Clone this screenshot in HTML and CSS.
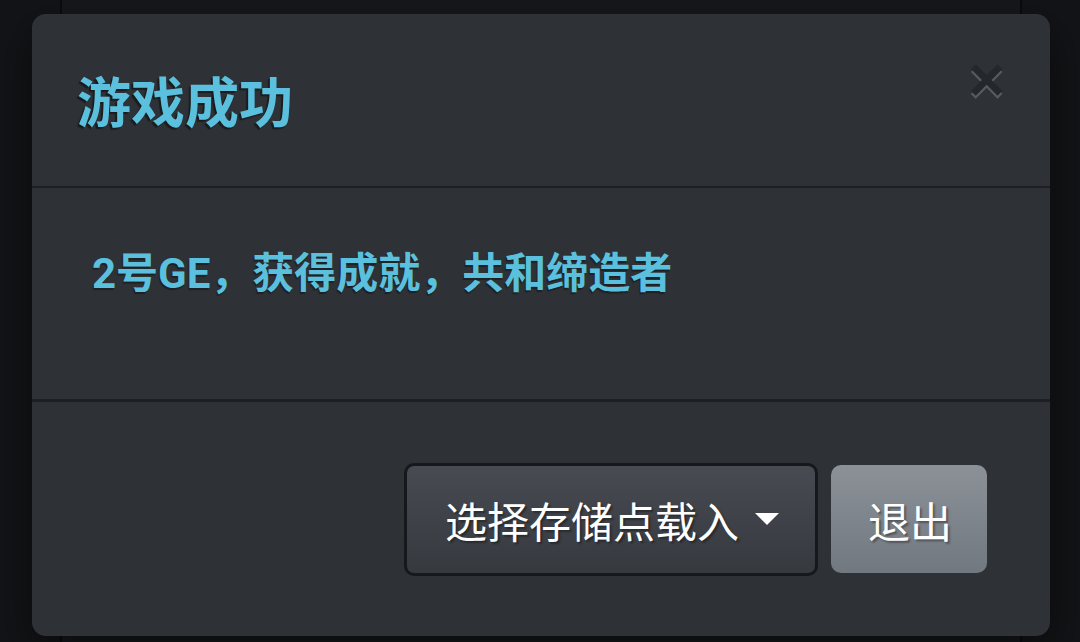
FILE: index.html
```html
<!DOCTYPE html>
<html lang="zh-CN">
<head>
<meta charset="utf-8">
<title>游戏成功</title>
<link rel="stylesheet" href="styles.css">
</head>
<body>
<div class="page"></div>
<div class="modal">
  <div class="modal-header">
    <h4 class="modal-title">游戏成功</h4>
    <button class="close" type="button">&times;</button>
  </div>
  <div class="modal-body">
    <p class="message">2号GE，获得成就，共和缔造者</p>
  </div>
  <div class="modal-footer">
    <button class="btn btn-dropdown" type="button"><span class="label">选择存储点载入</span><span class="caret"></span></button>
    <button class="btn btn-exit" type="button">退出</button>
  </div>
</div>
</body>
</html>
```

FILE: styles.css
```css
html, body {
  margin: 0;
  padding: 0;
  height: 100%;
}
body {
  background: #131417;
  font-family: Roboto, "Noto Sans CJK SC", sans-serif;
  overflow: hidden;
}
.page {
  margin-left: 60px;
  width: 962px;
  height: 642px;
  box-sizing: border-box;
  border-left: 2px solid #0a0b0d;
  border-right: 2px solid #0a0b0d;
  background: #17181c;
}
.modal {
  position: absolute;
  left: 32px;
  top: 14px;
  width: 1018px;
  height: 622px;
  background: #2e3236;
  border-radius: 14px;
  box-shadow: 0 15px 45px rgba(0, 0, 0, 0.5);
  display: flex;
  flex-direction: column;
}
.modal-header {
  display: flex;
  align-items: flex-start;
  padding: 52px 45px 43px 45px;
  border-bottom: 2px solid #1d1f22;
}
.modal-title {
  flex: 1;
  margin: 0;
  font-family: Roboto, "Noto Sans CJK SC", sans-serif;
  font-size: 54px;
  font-weight: 700;
  line-height: 77px;
  color: #5bc0de;
  text-shadow: -2px 2px 1px rgba(0, 0, 0, 0.45);
}
.close {
  margin: -18px 0 0 0;
  padding: 0;
  border: 0;
  background: transparent;
  font-family: "Liberation Sans", Arial, sans-serif;
  font-size: 63px;
  font-weight: 700;
  line-height: 1;
  color: #000;
  text-shadow: 0 3px 0 #fff;
  opacity: 0.2;
}
.modal-body {
  padding: 56px 45px 95px 60px;
  border-bottom: 3px solid #1d1f22;
}
.message {
  margin: 0;
  font-size: 42px;
  font-weight: 700;
  line-height: 60px;
  color: #5bc0de;
  text-shadow: -1px 2px 1px rgba(0, 0, 0, 0.35);
}
.modal-footer {
  flex: 1;
  display: flex;
  justify-content: flex-end;
  align-items: center;
  padding: 0 63px 0 45px;
  gap: 13px;
}
.btn {
  font-family: "Noto Sans CJK SC", Roboto, sans-serif;
  font-size: 42px;
  font-weight: 400;
  color: #fff;
  text-shadow: 2px 2px 2px rgba(0, 0, 0, 0.35);
  border-radius: 10px;
  display: flex;
  align-items: center;
  box-sizing: border-box;
  white-space: nowrap;
  margin: 0;
}
.btn-dropdown {
  width: 414px;
  height: 113px;
  padding: 0 0 0 38px;
  border: 3px solid #16181b;
  background: linear-gradient(#474b52, #36393e);
}
.caret {
  display: inline-block;
  width: 0;
  height: 0;
  margin-left: 16px;
  border-top: 12px solid #fff;
  border-left: 12px solid transparent;
  border-right: 12px solid transparent;
}
.btn-exit {
  width: 156px;
  height: 108px;
  padding: 0 0 0 37px;
  border: 0;
  background: linear-gradient(#8b9197, #727880);
}
```
